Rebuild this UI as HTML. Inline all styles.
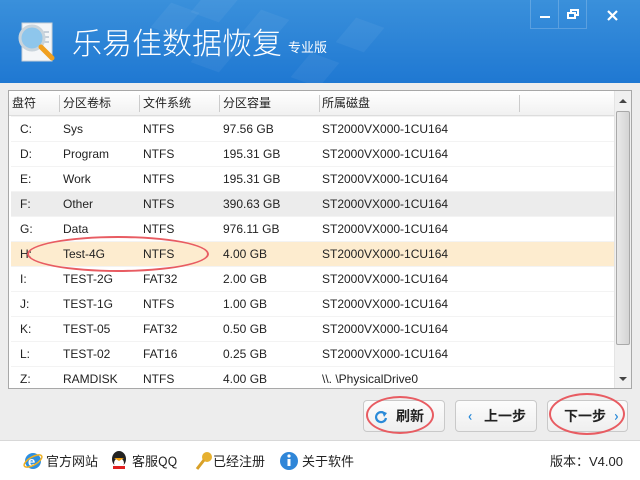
<!DOCTYPE html>
<html><head><meta charset="utf-8"><style>
*{margin:0;padding:0;box-sizing:border-box}
body{width:640px;height:480px;overflow:hidden;background:#ededed;font-family:"Liberation Sans","Noto Sans CJK SC",sans-serif;font-size:12px;color:#222;position:relative}
.title{position:absolute;left:0;top:0;width:640px;height:83px;background:linear-gradient(#3a90db,#1f78d2);overflow:hidden}
.dia{position:absolute;width:30px;height:30px;background:rgba(255,255,255,0.05);transform:rotate(20deg) skewX(-20deg)}
.tt{position:absolute;left:72px;top:21px;color:#fff;font-size:30px;font-family:"Noto Sans CJK SC",sans-serif;font-weight:300;line-height:40px;white-space:nowrap}
.sub{position:absolute;left:288px;top:37px;color:#fff;font-size:13px;font-family:"Noto Sans CJK SC",sans-serif}
.wb{position:absolute;top:0;width:28px;height:29px;border-left:1px solid rgba(255,255,255,0.2);border-bottom:1px solid rgba(255,255,255,0.2)}
.tbl{position:absolute;left:8px;top:90px;width:624px;height:299px;border:1px solid #a8a8a8;background:#fff;overflow:hidden}
.hd{position:absolute;left:0;top:0;width:605px;height:25px;background:linear-gradient(#fff,#f1f1f1);border-bottom:1px solid #ddd}
.c{position:absolute;top:0;height:25px;line-height:25px;white-space:nowrap}
.hs{position:absolute;top:4px;width:1px;height:17px;background:#ccc}
.row{position:absolute;left:2px;width:603px;height:25px;border-top:1px solid #f3f3f3}
.sb{position:absolute;left:605px;top:0;width:17px;height:297px;background:#f0f0f0;border-left:1px solid #e4e4e4}
.th{position:absolute;left:1px;top:20px;width:14px;height:234px;border:1px solid #a9a9a9;border-radius:2px;background:linear-gradient(90deg,#e9e9e9,#d4d4d4)}
.btn{position:absolute;top:400px;height:32px;border:1px solid #c9c9c9;border-radius:4px;background:linear-gradient(#fcfcfc,#efefef);font-weight:bold;font-size:14px;line-height:30px;font-family:"Noto Sans CJK SC",sans-serif}
.ell{position:absolute;border:2px solid #e85c62;border-radius:50%}
.foot{position:absolute;left:0;top:440px;width:640px;height:40px;background:#fff;border-top:1px solid #d8d8d8}
.fi{position:absolute;top:12px;font-size:13px;font-family:"Noto Sans CJK SC",sans-serif;line-height:16px}
</style></head><body>
<div class="title">
<div class="dia" style="left:160px;top:5px"></div><div class="dia" style="left:200px;top:40px"></div><div class="dia" style="left:250px;top:12px"></div><div class="dia" style="left:300px;top:55px"></div><div class="dia" style="left:345px;top:20px"></div><div class="dia" style="left:200px;top:-10px"></div>
<svg style="position:absolute;left:15px;top:20px" width="50" height="45"><rect x="7" y="3" width="30" height="38" fill="#f4f6f8" stroke="#c8d0d8"/><line x1="26" y1="12" x2="34" y2="12" stroke="#9ab"/><line x1="26" y1="17" x2="34" y2="17" stroke="#9ab"/><line x1="26" y1="22" x2="34" y2="22" stroke="#9ab"/><circle cx="17" cy="18" r="12" fill="#8ec6ec" stroke="#c9d4dc" stroke-width="3"/><line x1="26" y1="27" x2="37" y2="38" stroke="#f0a020" stroke-width="5" stroke-linecap="round"/></svg>
<div class="tt">乐易佳数据恢复</div><div class="sub">专业版</div>
<div class="wb" style="left:530px"><div style="position:absolute;left:9px;top:16px;width:10px;height:2px;background:#fff"></div></div>
<div class="wb" style="left:558px"><svg style="position:absolute;left:8px;top:9px" width="13" height="11"><rect x="4" y="1" width="7" height="5" fill="none" stroke="#fff" stroke-width="2"/><rect x="1" y="4" width="7" height="5" fill="#2a85d6" stroke="#fff" stroke-width="2"/></svg></div>
<div class="wb" style="left:586px;width:54px;border-bottom:none"><svg style="position:absolute;left:20px;top:10px" width="12" height="12"><path d="M1 1L10 10M10 1L1 10" stroke="#fff" stroke-width="2.2"/></svg></div>
</div>
<div class="tbl">
<div class="hd"><div class="c" style="left:3px">盘符</div><div class="hs" style="left:50px"></div><div class="c" style="left:54px">分区卷标</div><div class="hs" style="left:130px"></div><div class="c" style="left:134px">文件系统</div><div class="hs" style="left:210px"></div><div class="c" style="left:214px">分区容量</div><div class="hs" style="left:310px"></div><div class="c" style="left:313px">所属磁盘</div><div class="hs" style="left:510px"></div></div>
<div class="row" style="top:25px"><div class="c" style="left:9px">C:</div><div class="c" style="left:52px">Sys</div><div class="c" style="left:132px">NTFS</div><div class="c" style="left:212px">97.56 GB</div><div class="c" style="left:311px">ST2000VX000-1CU164</div></div>
<div class="row" style="top:50px"><div class="c" style="left:9px">D:</div><div class="c" style="left:52px">Program</div><div class="c" style="left:132px">NTFS</div><div class="c" style="left:212px">195.31 GB</div><div class="c" style="left:311px">ST2000VX000-1CU164</div></div>
<div class="row" style="top:75px"><div class="c" style="left:9px">E:</div><div class="c" style="left:52px">Work</div><div class="c" style="left:132px">NTFS</div><div class="c" style="left:212px">195.31 GB</div><div class="c" style="left:311px">ST2000VX000-1CU164</div></div>
<div class="row" style="top:100px;background:#ececec"><div class="c" style="left:9px">F:</div><div class="c" style="left:52px">Other</div><div class="c" style="left:132px">NTFS</div><div class="c" style="left:212px">390.63 GB</div><div class="c" style="left:311px">ST2000VX000-1CU164</div></div>
<div class="row" style="top:125px"><div class="c" style="left:9px">G:</div><div class="c" style="left:52px">Data</div><div class="c" style="left:132px">NTFS</div><div class="c" style="left:212px">976.11 GB</div><div class="c" style="left:311px">ST2000VX000-1CU164</div></div>
<div class="row" style="top:150px;background:#fdeccf"><div class="c" style="left:9px">H:</div><div class="c" style="left:52px">Test-4G</div><div class="c" style="left:132px">NTFS</div><div class="c" style="left:212px">4.00 GB</div><div class="c" style="left:311px">ST2000VX000-1CU164</div></div>
<div class="row" style="top:175px"><div class="c" style="left:9px">I:</div><div class="c" style="left:52px">TEST-2G</div><div class="c" style="left:132px">FAT32</div><div class="c" style="left:212px">2.00 GB</div><div class="c" style="left:311px">ST2000VX000-1CU164</div></div>
<div class="row" style="top:200px"><div class="c" style="left:9px">J:</div><div class="c" style="left:52px">TEST-1G</div><div class="c" style="left:132px">NTFS</div><div class="c" style="left:212px">1.00 GB</div><div class="c" style="left:311px">ST2000VX000-1CU164</div></div>
<div class="row" style="top:225px"><div class="c" style="left:9px">K:</div><div class="c" style="left:52px">TEST-05</div><div class="c" style="left:132px">FAT32</div><div class="c" style="left:212px">0.50 GB</div><div class="c" style="left:311px">ST2000VX000-1CU164</div></div>
<div class="row" style="top:250px"><div class="c" style="left:9px">L:</div><div class="c" style="left:52px">TEST-02</div><div class="c" style="left:132px">FAT16</div><div class="c" style="left:212px">0.25 GB</div><div class="c" style="left:311px">ST2000VX000-1CU164</div></div>
<div class="row" style="top:275px"><div class="c" style="left:9px">Z:</div><div class="c" style="left:52px">RAMDISK</div><div class="c" style="left:132px">NTFS</div><div class="c" style="left:212px">4.00 GB</div><div class="c" style="left:311px">\\. \PhysicalDrive0</div></div>
<div class="sb"><div style="position:absolute;left:4px;top:8px;border:4px solid transparent;border-bottom:4px solid #444;border-top:none"></div><div class="th"></div><div style="position:absolute;left:4px;top:286px;border:4px solid transparent;border-top:4px solid #444;border-bottom:none"></div></div>
</div>
<div class="ell" style="left:27px;top:236px;width:182px;height:36px"></div>
<div class="btn" style="left:363px;width:82px"><svg style="position:absolute;left:10px;top:9px" width="14" height="14"><path d="M11 4A5 5 0 1 0 12 8" fill="none" stroke="#2a8ad8" stroke-width="2.2"/><path d="M8 1L13 3L10 7Z" fill="#2a8ad8"/></svg><span style="position:absolute;left:32px">刷新</span></div>
<div class="btn" style="left:455px;width:82px"><span style="position:absolute;left:12px;color:#2a8ad8">‹</span><span style="position:absolute;left:28px">上一步</span></div>
<div class="btn" style="left:547px;width:81px"><span style="position:absolute;left:16px">下一步</span><span style="position:absolute;left:66px;color:#2a8ad8">›</span></div>
<div class="ell" style="left:366px;top:396px;width:68px;height:38px"></div>
<div class="ell" style="left:549px;top:393px;width:76px;height:42px"></div>
<div class="foot">
<svg style="position:absolute;left:23px;top:10px" width="20" height="20"><circle cx="10" cy="10" r="8" fill="#2e8fe0"/><text x="5" y="15" fill="#fff" font-size="13" font-family="Liberation Sans" font-weight="bold">e</text><ellipse cx="10" cy="10" rx="10" ry="4" fill="none" stroke="#f0b020" stroke-width="1.5" transform="rotate(-30 10 10)"/></svg>
<div class="fi" style="left:46px">官方网站</div>
<svg style="position:absolute;left:109px;top:9px" width="20" height="22"><ellipse cx="10" cy="9" rx="7" ry="8" fill="#222"/><ellipse cx="10" cy="13" rx="5" ry="5" fill="#fff"/><path d="M5 8L15 8L10 11Z" fill="#f0a010"/><rect x="4" y="16" width="12" height="3" fill="#e02020"/></svg>
<div class="fi" style="left:132px">客服QQ</div>
<svg style="position:absolute;left:195px;top:10px" width="18" height="20"><circle cx="12" cy="6" r="5" fill="#e6b030"/><line x1="9" y1="9" x2="2" y2="18" stroke="#d8a028" stroke-width="3"/></svg>
<div class="fi" style="left:213px">已经注册</div>
<svg style="position:absolute;left:279px;top:10px" width="20" height="20"><circle cx="10" cy="10" r="9" fill="#2f86d8"/><rect x="8.5" y="8" width="3" height="7" fill="#fff"/><circle cx="10" cy="5" r="1.6" fill="#fff"/></svg>
<div class="fi" style="left:302px">关于软件</div>
<div class="fi" style="left:550px">版本：<span style="font-family:'Liberation Sans'">V4.00</span></div>
</div>
</body></html>
